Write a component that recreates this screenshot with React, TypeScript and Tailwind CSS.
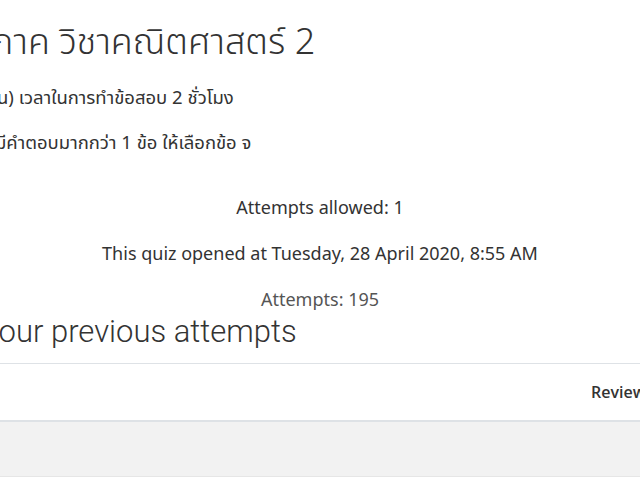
export default function App() {
  return (
    <div className="w-[640px] h-[480px] overflow-hidden bg-white text-[#333]">
      <div className="-mx-[17px] flex flex-col">
        <h2 className="mt-[21px] ml-[9px] text-[36px] leading-[44px] font-light text-[#333] whitespace-nowrap [font-family:'Noto_Sans_Thai','Noto_Sans','Open_Sans',sans-serif]">
          ภาค วิชาคณิตศาสตร์ 2
        </h2>
        <p className="mt-[21px] ml-[14px] text-[18.5px] leading-[24px] whitespace-nowrap [font-family:'Noto_Sans_Thai','Noto_Sans',sans-serif]">
          น) เวลาในการทำข้อสอบ 2 ชั่วโมง
        </p>
        <p className="mt-[21px] ml-[12px] text-[18.5px] leading-[24px] whitespace-nowrap [font-family:'Noto_Sans_Thai','Noto_Sans',sans-serif]">
          มีคำตอบมากกว่า 1 ข้อ ให้เลือกข้อ จ
        </p>
        <div className="mt-[40px] flex flex-col items-center gap-[22px] text-[18px] leading-[24px] [font-family:'Noto_Sans','Open_Sans',sans-serif]">
          <p>Attempts allowed: 1</p>
          <p>This quiz opened at Tuesday, 28 April 2020, 8:55 AM</p>
          <p className="text-[#555]">Attempts: 195</p>
        </div>
        <h3 className="mt-[1px] -ml-[2px] text-[31px] leading-[40px] font-light text-[#333] whitespace-nowrap [font-family:Roboto,sans-serif]">
          Your previous attempts
        </h3>
        <table className="mt-[11px] w-full border-collapse">
          <thead>
            <tr className="border-t border-[#dee2e6]">
              <th className="h-[57px] border-b-2 border-[#dee2e6]"></th>
              <th className="h-[57px] w-[66px] border-b-2 border-[#dee2e6] text-left text-[16px] font-semibold text-[#333] [font-family:'Open_Sans',sans-serif]">
                Review
              </th>
            </tr>
          </thead>
          <tbody>
            <tr className="bg-[#f2f2f2] border-b border-[#e6e6e6]">
              <td className="h-[56px]"></td>
              <td className="h-[56px]"></td>
            </tr>
          </tbody>
        </table>
      </div>
    </div>
  );
}
